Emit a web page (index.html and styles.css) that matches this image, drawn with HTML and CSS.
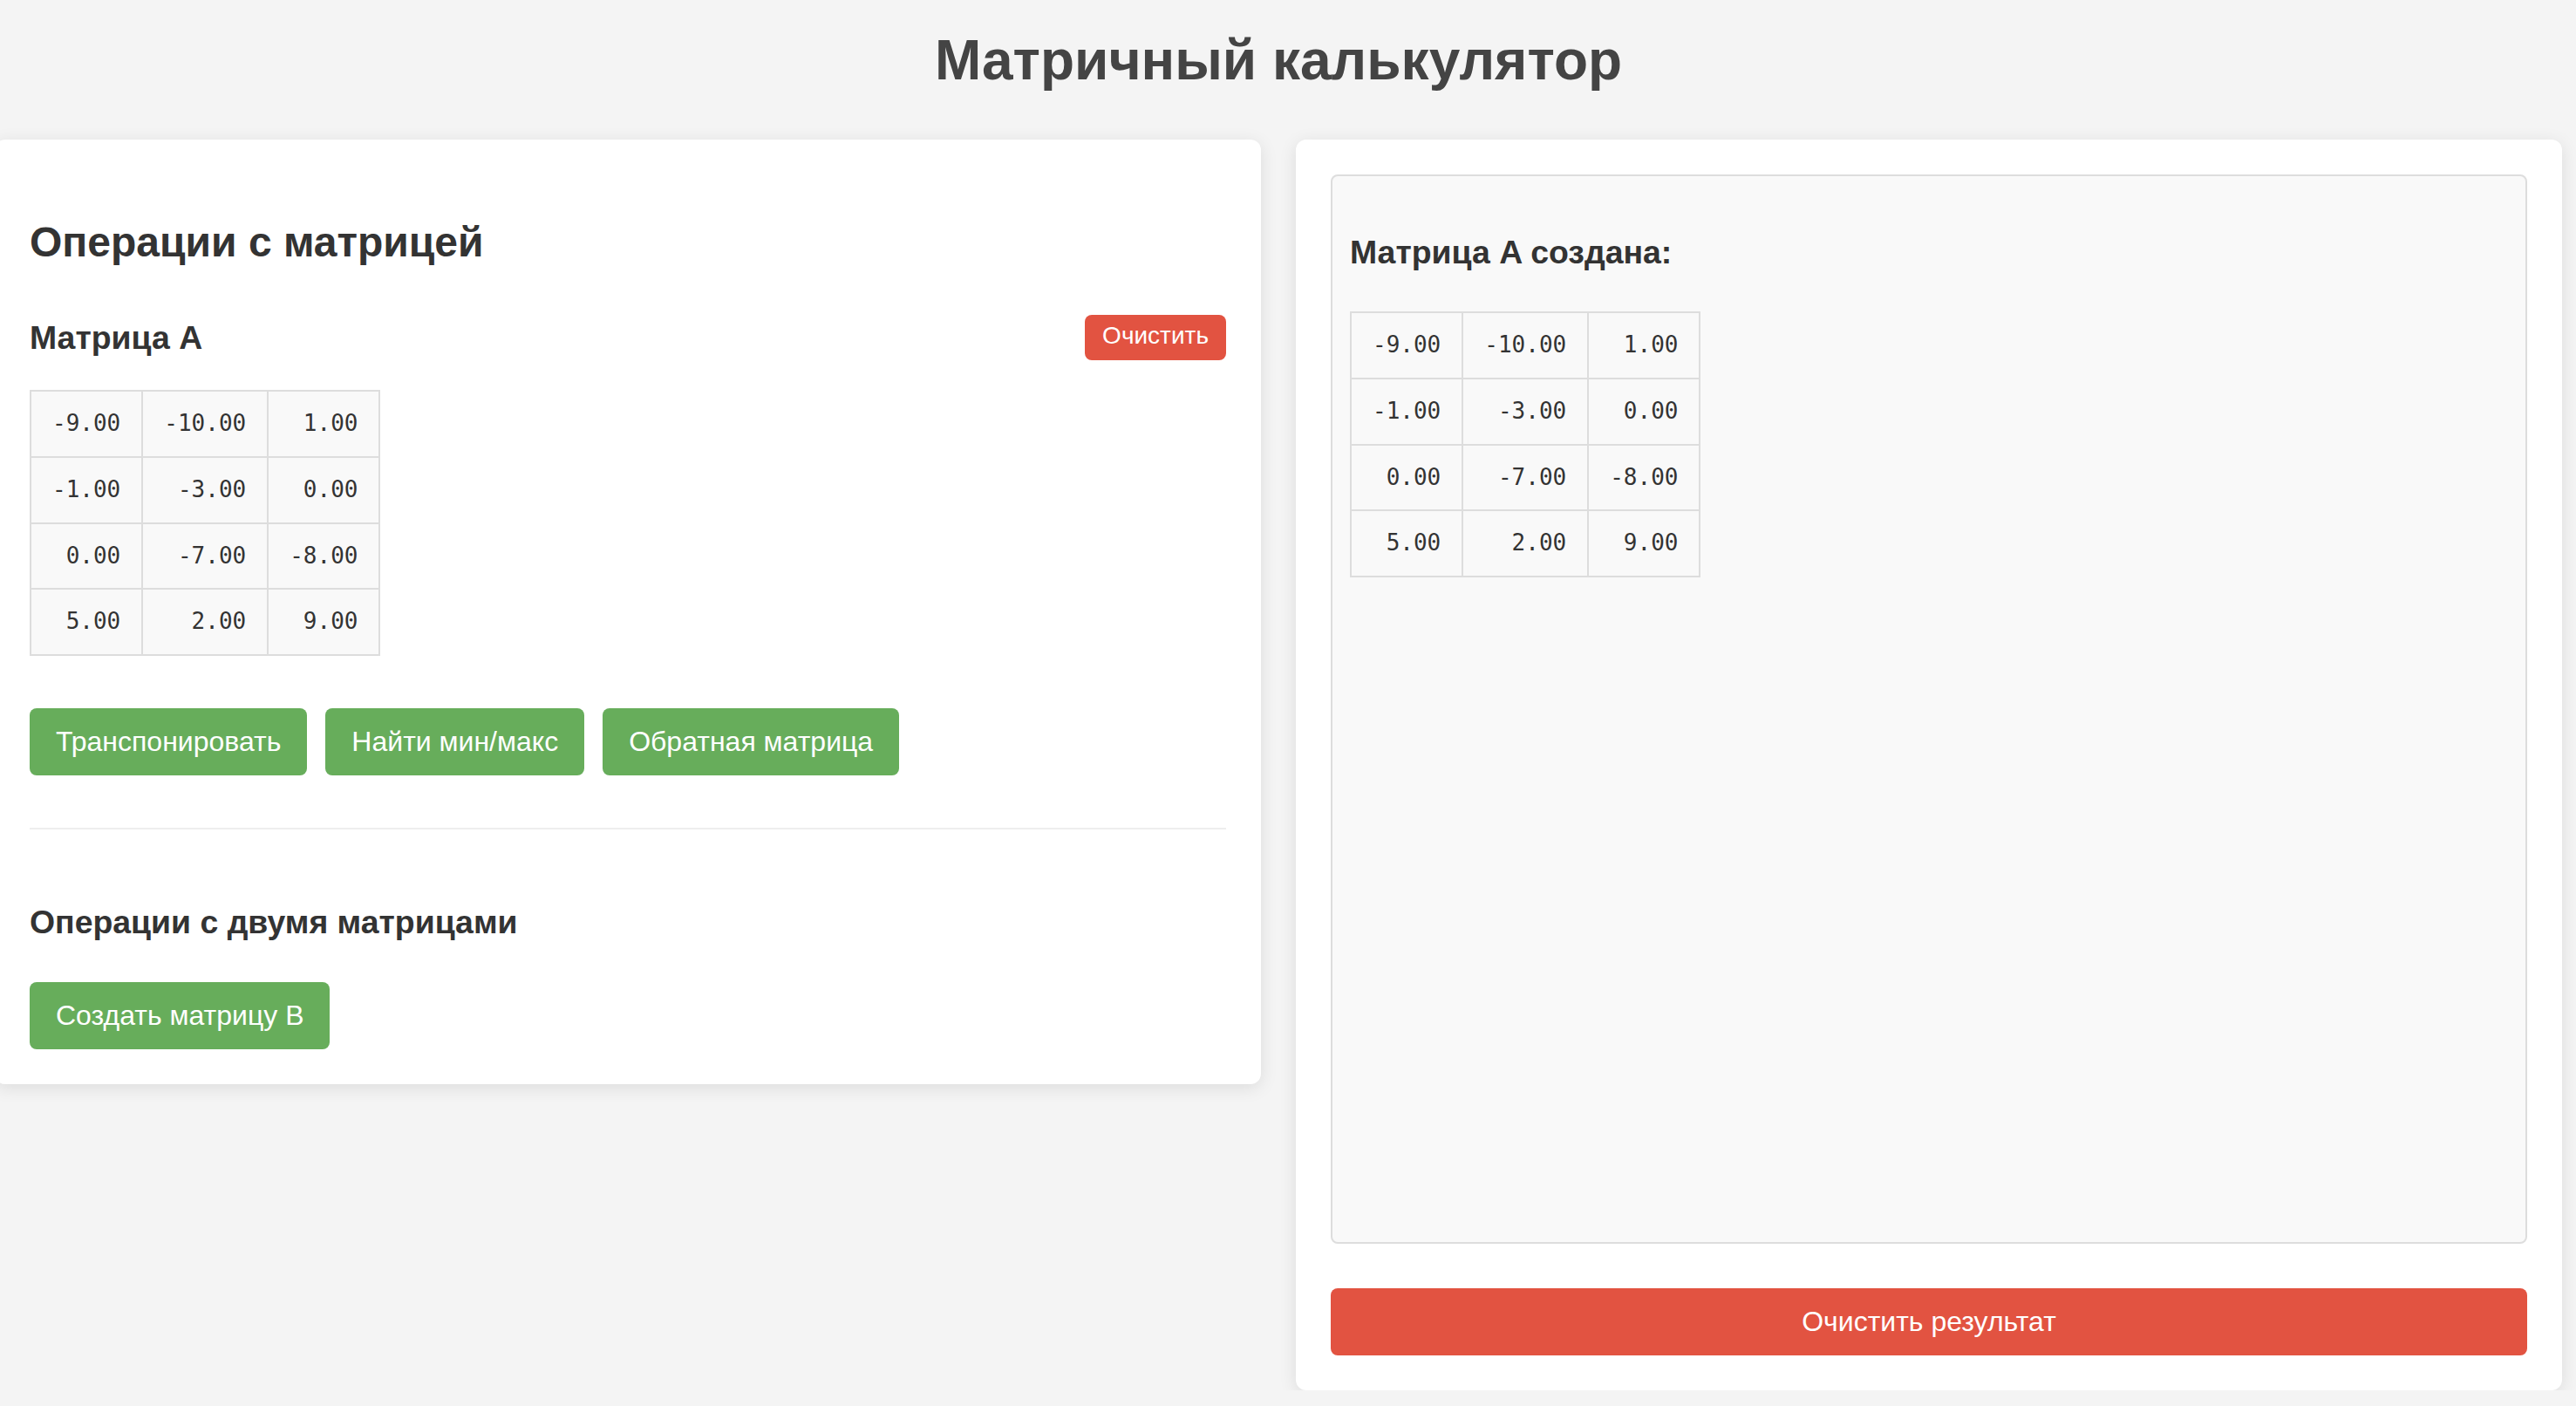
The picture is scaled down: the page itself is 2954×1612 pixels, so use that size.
FILE: index.html
```html
<!DOCTYPE html>
<html lang="ru">
<head>
<meta charset="utf-8">
<title>Матричный калькулятор</title>
<link rel="stylesheet" href="styles.css">
</head>
<body>
<div class="page">
  <h1 class="title">Матричный калькулятор</h1>
  <div class="layout">
    <section class="card">
      <h2 class="section-title">Операции с матрицей</h2>
      <div class="matrix-header">
        <h3 class="sub-title">Матрица A</h3>
        <button class="btn btn-red btn-small">Очистить</button>
      </div>
      <table class="matrix matrix-input">
        <tr><td>-9.00</td><td>-10.00</td><td>1.00</td></tr>
        <tr><td>-1.00</td><td>-3.00</td><td>0.00</td></tr>
        <tr><td>0.00</td><td>-7.00</td><td>-8.00</td></tr>
        <tr><td>5.00</td><td>2.00</td><td>9.00</td></tr>
      </table>
      <div class="btn-row">
        <button class="btn btn-green">Транспонировать</button>
        <button class="btn btn-green">Найти мин/макс</button>
        <button class="btn btn-green">Обратная матрица</button>
      </div>
      <hr class="divider">
      <h3 class="sub-title two-title">Операции с двумя матрицами</h3>
      <button class="btn btn-green create-btn">Создать матрицу B</button>
    </section>
    <section class="card">
      <div class="result">
        <h3 class="sub-title result-title">Матрица A создана:</h3>
        <table class="matrix matrix-result">
          <tr><td>-9.00</td><td>-10.00</td><td>1.00</td></tr>
          <tr><td>-1.00</td><td>-3.00</td><td>0.00</td></tr>
          <tr><td>0.00</td><td>-7.00</td><td>-8.00</td></tr>
          <tr><td>5.00</td><td>2.00</td><td>9.00</td></tr>
        </table>
      </div>
      <button class="btn btn-red btn-wide">Очистить результат</button>
    </section>
  </div>
</div>
</body>
</html>
```
FILE: styles.css
```css
* {
  box-sizing: border-box;
}

html, body {
  margin: 0;
  padding: 0;
}

body {
  background: #f4f4f4;
  font-family: "Liberation Sans", Arial, Helvetica, sans-serif;
  color: #333;
  overflow: hidden;
}

.page {
  width: 2944px;
  margin-left: -6px;
}

.title {
  margin: 0 0 54px;
  padding-top: 32px;
  font-size: 64px;
  line-height: 74px;
  font-weight: bold;
  text-align: center;
  color: #444;
}

.layout {
  display: flex;
  align-items: flex-start;
  gap: 40px;
}

.card {
  flex: 1 1 0;
  background: #fff;
  border-radius: 12px;
  padding: 40px;
  box-shadow: 0 4px 20px rgba(0, 0, 0, 0.1);
}

.section-title {
  margin: 50px 0 0;
  font-size: 48px;
  line-height: 56px;
  font-weight: bold;
  color: #333;
}

.sub-title {
  margin: 0;
  font-size: 37.4px;
  line-height: 43px;
  font-weight: bold;
  color: #333;
}

.matrix-header {
  display: flex;
  justify-content: space-between;
  align-items: center;
  margin-top: 55px;
}

.btn {
  border: 0;
  color: #fff;
  font-family: "Liberation Sans", Arial, Helvetica, sans-serif;
  cursor: pointer;
  border-radius: 8px;
}

.btn-red {
  background: #e25341;
}

.btn-green {
  background: #67ad5b;
  font-size: 32px;
  line-height: 37px;
  padding: 20px 30px;
}

.btn-small {
  font-size: 28px;
  line-height: 32px;
  padding: 8px 20px 12px;
}

.matrix {
  border-collapse: collapse;
  font-family: "DejaVu Sans Mono", "Liberation Mono", monospace;
  font-size: 26px;
  color: #333;
}

.matrix td {
  border: 2px solid #ddd;
  background: #f9f9f9;
  padding: 22px 24px;
  line-height: 29.75px;
  text-align: right;
  white-space: nowrap;
}

.matrix-input {
  margin-top: 34px;
}

.btn-row {
  display: flex;
  gap: 21px;
  margin-top: 60px;
}

.divider {
  margin: 60px 0 0;
  height: 2px;
  border: 0;
  background: #eee;
}

.two-title {
  margin-top: 85px;
}

.create-btn {
  display: block;
  margin-top: 47px;
}

.result {
  height: 1226px;
  border: 2px solid #ddd;
  border-radius: 8px;
  background: #f9f9f9;
  padding: 20px;
}

.result-title {
  margin-top: 46px;
}

.matrix-result {
  margin-top: 46px;
}

.btn-wide {
  display: block;
  width: 100%;
  margin-top: 51px;
  font-size: 32px;
  line-height: 37px;
  padding: 20px 30px;
}
```
